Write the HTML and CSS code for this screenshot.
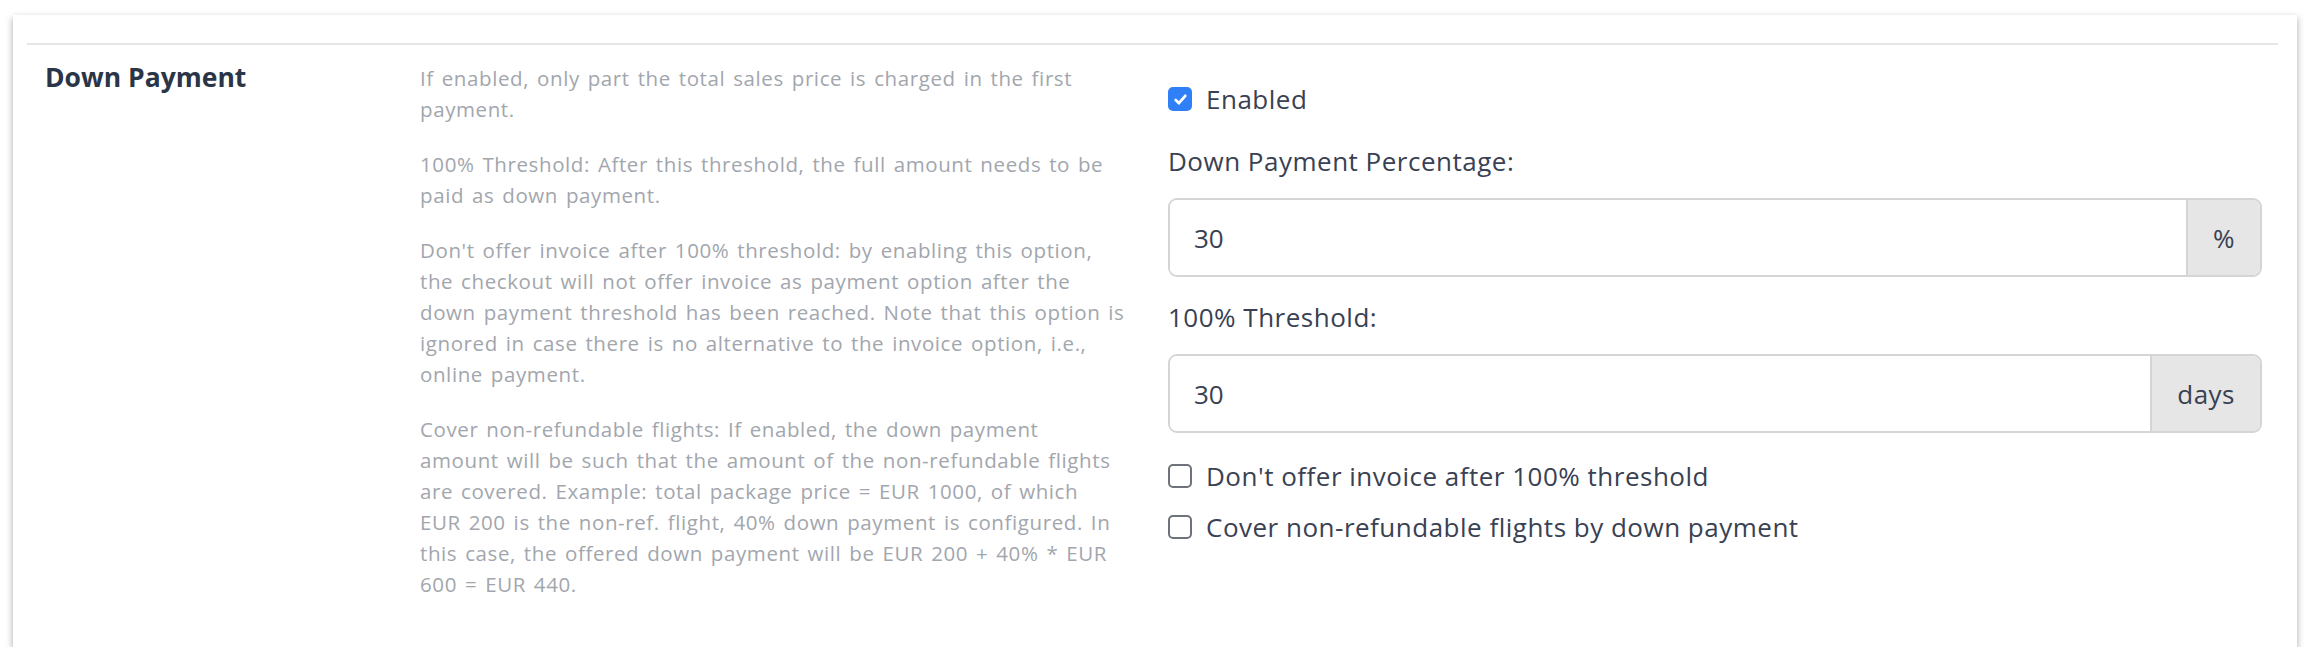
FILE: index.html
```html
<!doctype html>
<html lang="en">
  <head>
    <meta charset="UTF-8" />
    <meta name="viewport" content="width=device-width, initial-scale=1.0" />
    <title>Down Payment settings</title>
    <link rel="stylesheet" href="styles.css">
  </head>
  <body>
    <div class="card">
      <hr class="divider" />
      <div class="setting-row">
        <h3 class="setting-title">Down Payment</h3>

        <div class="setting-help">
          <p>
            If enabled, only part the total sales price is charged in the first<br />
            payment.
          </p>
          <p>
            100% Threshold: After this threshold, the full amount needs to be<br />
            paid as down payment.
          </p>
          <p>
            Don't offer invoice after 100% threshold: by enabling this option,<br />
            the checkout will not offer invoice as payment option after the<br />
            down payment threshold has been reached. Note that this option is<br />
            ignored in case there is no alternative to the invoice option, i.e.,<br />
            online payment.
          </p>
          <p>
            Cover non-refundable flights: If enabled, the down payment<br />
            amount will be such that the amount of the non-refundable flights<br />
            are covered. Example: total package price = EUR 1000, of which<br />
            EUR 200 is the non-ref. flight, 40% down payment is configured. In<br />
            this case, the offered down payment will be EUR 200 + 40% * EUR<br />
            600 = EUR 440.
          </p>
        </div>

        <div class="setting-form">
          <label class="check check-first">
            <span class="box checked">
              <svg viewBox="0 0 16 16" width="17" height="17">
                <path d="M3.5 8.5l3 3 6-7" fill="none" stroke="#fff" stroke-width="2.6" stroke-linecap="round" stroke-linejoin="round" />
              </svg>
            </span>
            Enabled
          </label>

          <label class="field-label" for="percentage">Down Payment Percentage:</label>
          <div class="input-group">
            <input id="percentage" class="input" type="text" value="30" />
            <span class="addon">%</span>
          </div>

          <label class="field-label" for="threshold">100% Threshold:</label>
          <div class="input-group">
            <input id="threshold" class="input" type="text" value="30" />
            <span class="addon">days</span>
          </div>

          <label class="check check-after-input">
            <span class="box"></span>
            Don't offer invoice after 100% threshold
          </label>
          <label class="check">
            <span class="box"></span>
            Cover non-refundable flights by down payment
          </label>
        </div>
      </div>
    </div>
  </body>
</html>
```

FILE: styles.css
```css
body {
  margin: 0;
  background-color: #ffffff;
  font-family: "Open Sans", Lato, Arial, sans-serif;
}
.card {
  margin: 15px 15px 0 13px;
  padding: 28px 19px 0 14px;
  height: 632px;
  box-sizing: border-box;
  background-color: #fff;
  box-shadow: 0 3px 7px rgba(0, 0, 0, 0.35);
}
.divider {
  margin: 0;
  border: none;
  border-top: 2px solid #e6e6e6;
}
.setting-row {
  display: grid;
  grid-template-columns: 375px 748px 1fr;
  padding: 18px 16px 0 18px;
}
.setting-title {
  margin: 0;
  font-size: 26.5px;
  line-height: 28px;
  font-weight: 700;
  color: #2b3548;
}
.setting-help {
  color: #a2a6ad;
  font-size: 20.5px;
  line-height: 31px;
  letter-spacing: 0.6px;
  word-spacing: 2px;
}
.setting-help p {
  margin: 0 0 24px;
}
.setting-form {
  display: flex;
  flex-direction: column;
  color: #394152;
  font-size: 26px;
  line-height: 36px;
  letter-spacing: 0.5px;
}
.check {
  display: flex;
  align-items: center;
  gap: 14px;
}
.check-first {
  margin-top: 18px;
  margin-bottom: 26px;
}
.check-after-input {
  margin-top: 3px;
  margin-bottom: 15px;
}
.box {
  width: 24px;
  height: 24px;
  box-sizing: border-box;
  border: 2px solid #6e737b;
  border-radius: 5px;
  display: flex;
  align-items: center;
  justify-content: center;
}
.box.checked {
  background-color: #2f7ff6;
  border-color: #2f7ff6;
}
.field-label {
  margin-bottom: 19px;
}
.input-group {
  display: flex;
  height: 79px;
  box-sizing: border-box;
  border: 2px solid #d5d5d5;
  border-radius: 9px;
  overflow: hidden;
  margin-bottom: 22px;
}
.input {
  flex: 1;
  border: none;
  outline: none;
  padding: 0 24px;
  font-family: inherit;
  font-size: 26px;
  color: #394152;
  background: #fff;
}
.addon {
  display: flex;
  align-items: center;
  padding: 0 25px;
  background-color: #e6e6e6;
  border-left: 2px solid #d5d5d5;
  color: #394152;
}
```
